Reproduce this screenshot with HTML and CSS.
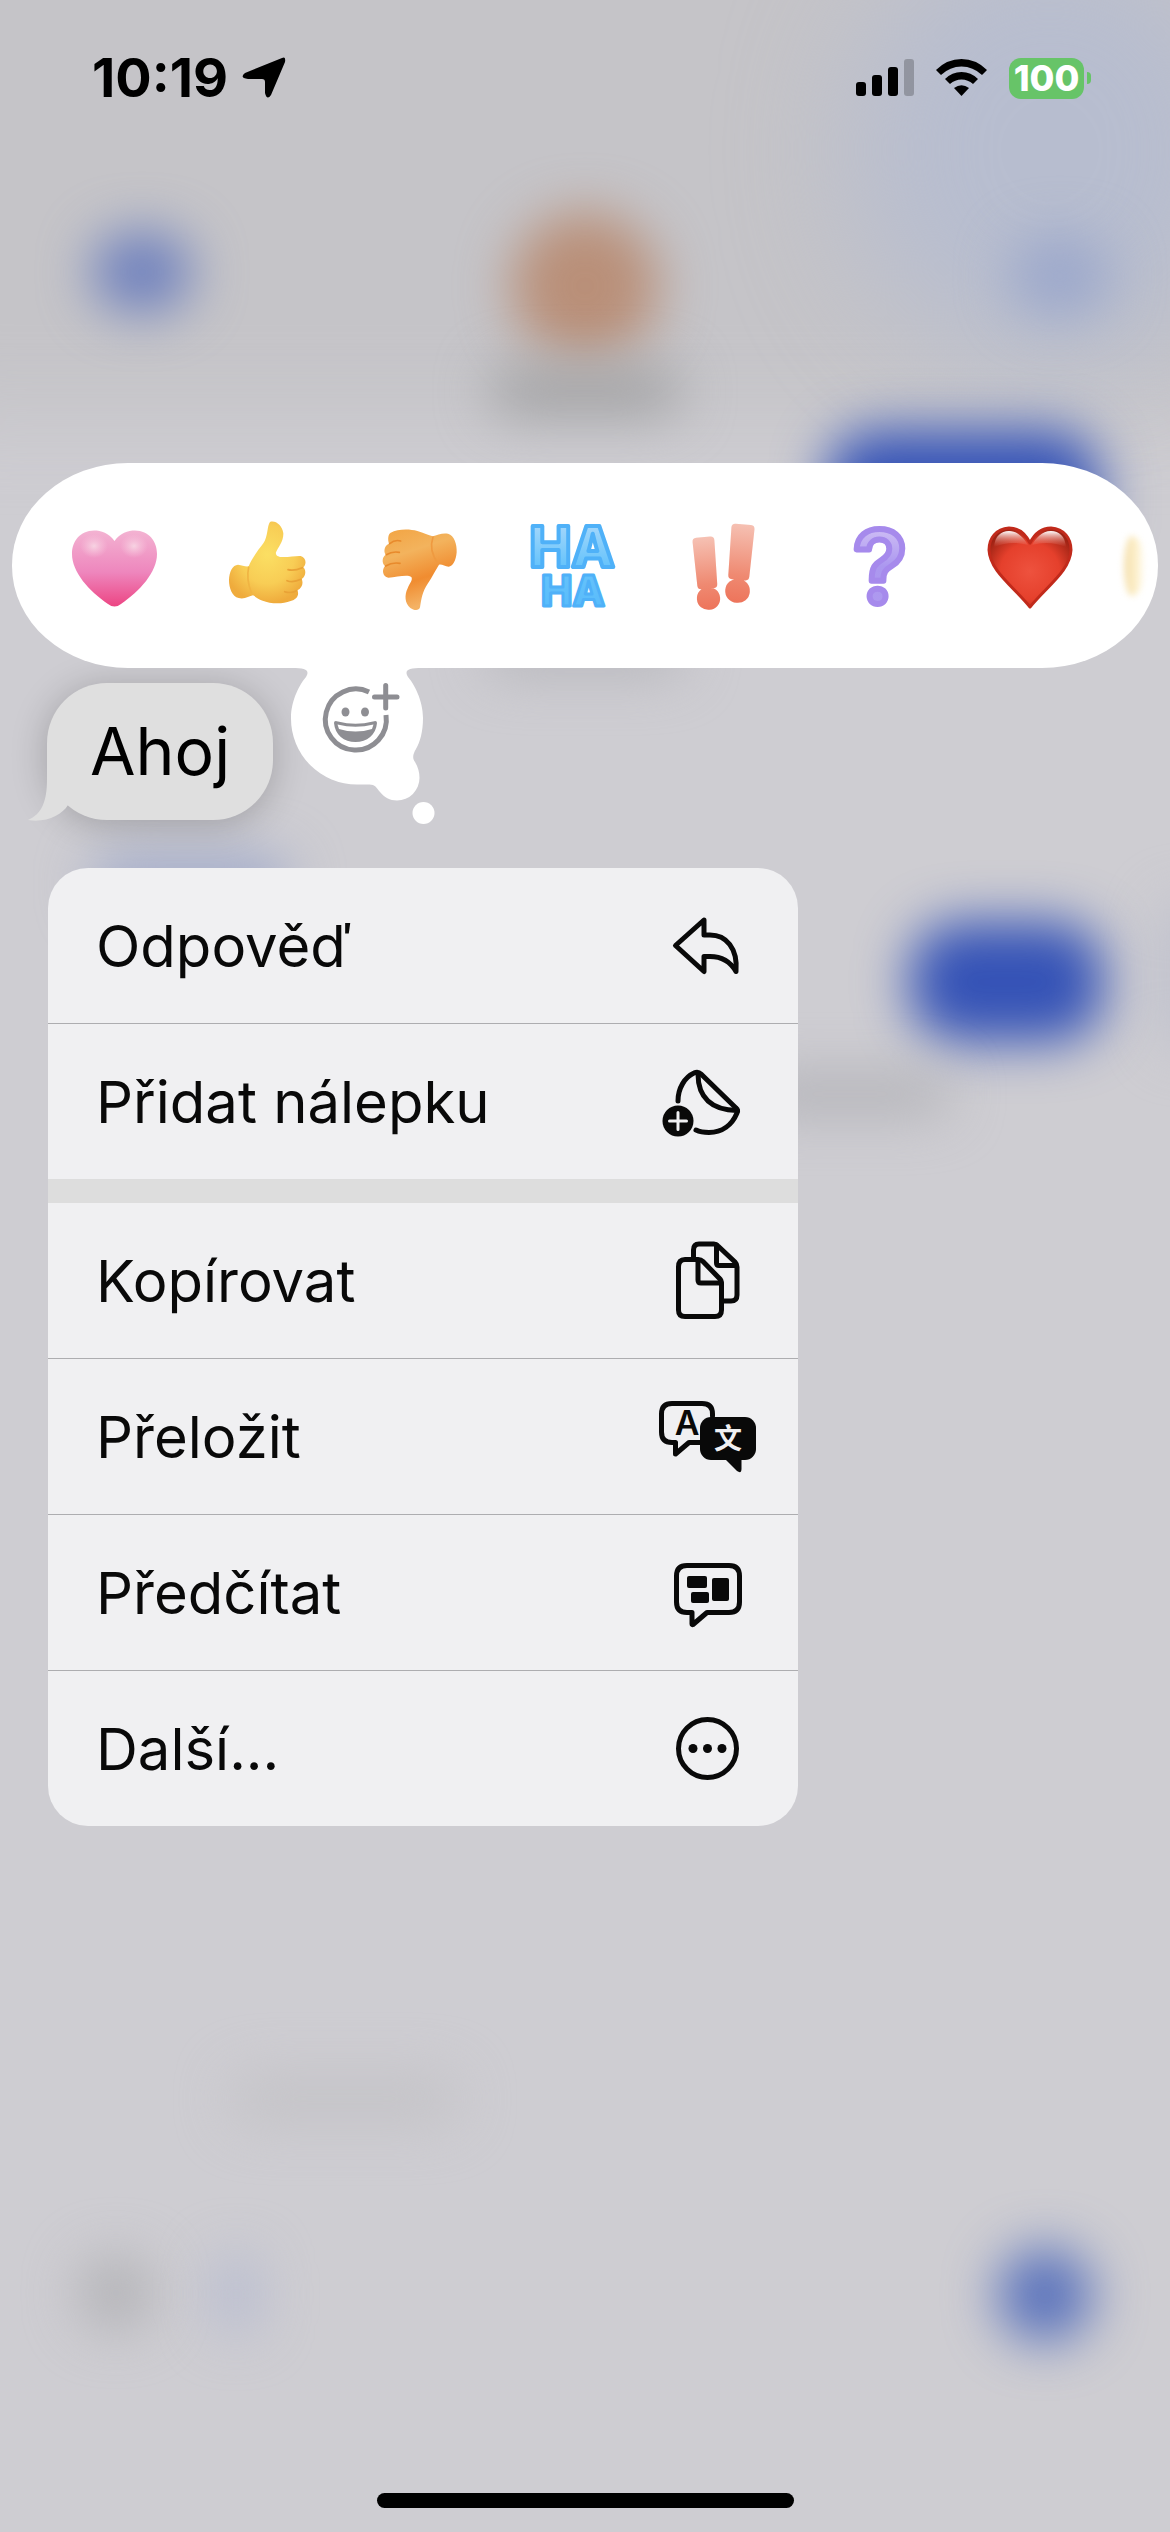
FILE: index.html
```html
<!DOCTYPE html>
<html lang="cs">
  <head>
    <meta charset="UTF-8" />
    <meta name="viewport" content="width=device-width, initial-scale=1.0" />
    <title>Zprávy</title>
    <link rel="stylesheet" href="styles.css">
  </head>
  <body>
    <!-- blurred conversation behind the menu -->
    <div class="backdrop" aria-hidden="true">
      <div class="blob navbar"></div>
      <div class="blob glow"></div>
      <div class="blob back"></div>
      <div class="blob avatar"></div>
      <div class="blob name"></div>
      <div class="blob video"></div>
      <div class="blob sent sent-top"></div>
      <div class="blob date"></div>
      <div class="blob link"></div>
      <div class="blob sent sent-low"></div>
      <div class="blob status-text"></div>
      <div class="blob edge"></div>
      <div class="blob hint"></div>
      <div class="blob plus"></div>
      <div class="blob caret"></div>
      <div class="blob send"></div>
    </div>

    <div class="screen">
      <header class="status-bar">
        <time class="clock">10:19</time>
        <svg class="location" viewBox="0 0 44 42" width="44" height="42">
          <path d="M40 1 Q44 -1 43 5 L29 38 Q25 44 23 36 V25 Q23 22 20 22 H6 Q-3 21 3 16 Z"/>
        </svg>
        <div class="status-right">
          <svg viewBox="0 0 58 38" width="58" height="38">
            <rect x="0" y="23" width="10" height="14" rx="3"/>
            <rect x="16" y="16" width="10" height="21" rx="3"/>
            <rect x="32" y="8" width="10" height="29" rx="3"/>
            <rect x="48" y="0" width="10" height="37" rx="3" opacity=".22"/>
          </svg>
          <svg viewBox="0 0 51 38" width="51" height="38">
            <path d="M0 11 Q11 0 25.500 0 T51 11 L46 16 Q37 7.500 25.500 7.500 T5 16 Z"/>
            <path d="M9 20 Q16 13 25.500 13 T42 20 L37 25 Q32 20.500 25.500 20.500 T14 25 Z"/>
            <path d="M18 29 Q25.500 23.500 33 29 L25.500 37 Z"/>
          </svg>
          <div class="battery">100</div>
        </div>
      </header>

      <main class="content">
        <section class="reactions">
          <button type="button" class="reaction" aria-label="Srdce">
            <svg viewBox="0 0 90 90">
              <defs>
                <linearGradient id="pink" x1="0" y1="0" x2="0" y2="1">
                  <stop offset="0" stop-color="#f3b3d2"/>
                  <stop offset=".55" stop-color="#ee86bd"/>
                  <stop offset="1" stop-color="#ec4583"/>
                </linearGradient>
                <radialGradient id="shine">
                  <stop offset="0" stop-color="#f7d3e2"/>
                  <stop offset="1" stop-color="#f7c3dc" stop-opacity="0"/>
                </radialGradient>
              </defs>
              <path fill="url(#pink)" d="M45.500 20 C40 12 32 9.500 25 9.500 C11 10 3 20 3 33 C3 51 20 70 39 83 Q45.500 88 52 83 C71 70 88 51 88 33 C88 20 80 10 66 9.500 C59 9.500 51 12 45.500 20Z"/>
              <ellipse cx="25" cy="25" rx="14" ry="12" fill="url(#shine)"/>
              <ellipse cx="65" cy="25" rx="14" ry="12" fill="url(#shine)"/>
            </svg>
          </button>
          <button type="button" class="reaction" aria-label="Palec nahoru">
            <svg viewBox="6 61 270 270">
              <defs>
                <radialGradient id="yellow" cx=".5" cy=".4" r=".6">
                  <stop offset="0" stop-color="#fbdf63"/>
                  <stop offset=".6" stop-color="#f8cd55"/>
                  <stop offset="1" stop-color="#efab3c"/>
                </radialGradient>
              </defs>
              <path fill="url(#yellow)" d="M150 64 C166 58 187 74 190 98 C191 122 174 140 168 155 C166 164 174 168 184 169 C205 170 228 165 242 166 C258 170 261 190 250 200 C259 208 258 226 245 235 C251 248 246 262 232 269 C239 284 229 297 212 301 C185 312 150 309 128 300 C115 296 107 288 99 284 C88 287 72 297 56 292 C36 288 27 262 27 238 C28 212 38 193 54 192 C66 193 76 199 86 197 C94 176 113 150 130 128 C144 108 141 76 150 64Z"/>
              <path fill="none" stroke="#e9a236" stroke-width="5" stroke-linecap="round" d="M247 201 Q222 212 204 207 M243 236 Q219 247 201 240 M230 270 Q212 279 194 273"/>
              <path fill="none" stroke="#f0b443" stroke-width="5" stroke-linecap="round" d="M86 200 Q78 235 94 276"/>
            </svg>
          </button>
          <button type="button" class="reaction" aria-label="Palec dolů">
            <svg viewBox="465 61 270 270">
              <defs>
                <linearGradient id="orange" x1="0" y1="0" x2=".3" y2="1">
                  <stop offset="0" stop-color="#f2a443"/>
                  <stop offset=".35" stop-color="#f3b35d"/>
                  <stop offset=".7" stop-color="#f08c30"/>
                  <stop offset="1" stop-color="#f4b264"/>
                </linearGradient>
              </defs>
              <path fill="url(#orange)" d="M515 96 C535 85 570 84 595 91 C615 96 628 104 641 107 C655 102 671 96 687 99 C706 105 714 130 713 155 C711 180 701 198 689 198 C678 198 669 190 660 192 C650 208 640 228 627 248 C609 276 608 292 603 320 C600 332 584 329 574 322 C557 308 556 283 566 263 C573 246 582 238 577 229 C565 220 533 230 508 231 C490 228 488 207 498 196 C487 186 490 168 500 162 C492 151 498 133 510 129 C506 116 507 101 515 96Z"/>
              <path fill="none" stroke="#e88a2c" stroke-width="5" stroke-linecap="round" d="M512 129 Q528 116 545 121 M502 162 Q520 151 541 155 M500 196 Q520 184 543 188"/>
              <path fill="none" stroke="#ef9a40" stroke-width="5" stroke-linecap="round" d="M642 109 Q628 150 658 190"/>
            </svg>
          </button>
          <button type="button" class="reaction" aria-label="Haha">
            <svg viewBox="0 0 90 90">
              <defs>
                <linearGradient id="blue" x1="0" y1="0" x2="0" y2="1">
                  <stop offset="0" stop-color="#b4dcfb"/>
                  <stop offset=".5" stop-color="#68c4fb"/>
                  <stop offset="1" stop-color="#56bafb"/>
                </linearGradient>
              </defs>
              <text class="haha" text-anchor="middle">
                <tspan class="haha-big" x="45" y="46">HA</tspan><tspan class="haha-small" x="46" y="85">HA</tspan>
              </text>
            </svg>
          </button>
          <button type="button" class="reaction" aria-label="Zdůraznit">
            <svg viewBox="0 0 90 90">
              <defs>
                <linearGradient id="coral" x1="0" y1="0" x2="0" y2="1">
                  <stop offset="0" stop-color="#f8d5cb"/>
                  <stop offset=".6" stop-color="#ef8a72"/>
                  <stop offset="1" stop-color="#ec664c"/>
                </linearGradient>
              </defs>
              <text class="bang bang-left" x="29" y="84" text-anchor="middle" transform="rotate(-5 29 84)">!</text>
              <text class="bang bang-right" x="57" y="77" text-anchor="middle" transform="rotate(5 57 77)">!</text>
            </svg>
          </button>
          <button type="button" class="reaction" aria-label="Otázka">
            <svg viewBox="0 0 90 90">
              <defs>
                <linearGradient id="violet" x1="0" y1="0" x2="0" y2="1">
                  <stop offset="0" stop-color="#e2d3f8"/>
                  <stop offset=".5" stop-color="#ab97ef"/>
                  <stop offset="1" stop-color="#b09bf0"/>
                </linearGradient>
              </defs>
              <text class="question" x="48" y="82" text-anchor="middle">?</text>
            </svg>
          </button>
          <button type="button" class="reaction" aria-label="Červené srdce">
            <svg viewBox="0 0 90 90">
              <defs>
                <radialGradient id="red" cx=".5" cy=".55" r=".6">
                  <stop offset="0" stop-color="#ee523e"/>
                  <stop offset=".6" stop-color="#e5402c"/>
                  <stop offset="1" stop-color="#9d2213"/>
                </radialGradient>
                <linearGradient id="gloss" x1="0" y1="0" x2="0" y2="1">
                  <stop offset="0" stop-color="#fff"/>
                  <stop offset="1" stop-color="#f08070" stop-opacity="0"/>
                </linearGradient>
              </defs>
              <path fill="url(#red)" stroke="#c12a1b" stroke-width="3" stroke-linejoin="round" d="M45 22 C39 10 31 7 24 7 C11 8 4 17 4 29 C5 50 28 65 45 86 C62 65 85 50 86 29 C86 17 79 8 66 7 C59 7 51 10 45 22Z"/>
              <path fill="url(#gloss)" d="M9 26 C10 15 16 10 24 10 C33 10 40 18 43 24 Q26 19 9 26Z M81 26 C80 15 74 10 66 10 C57 10 50 18 47 24 Q64 19 81 26Z"/>
            </svg>
          </button>
          <span class="next-reaction"></span>

          <button type="button" class="add-reaction" aria-label="Přidat reakci">
            <svg viewBox="0 16 180 170" width="180" height="170">
              <path fill="#fff" d="M12 16 H142 V18 C128 18 124 20 128 27 C134 34 143 50 143 68 C143 82 140 92 136 99 C133 104 132 108 135 112 C138 117 139.500 122 139.500 128 A22.500 22.500 0 0 1 117 150.500 C110 150.500 104 147 100 142 C96 137 95 134 88 134.500 H77 A66 66 0 0 1 11 68 C11 50 20 34 26 27 C30 20 26 18 12 18Z"/>
              <circle cx="143.500" cy="163" r="11" fill="#fff"/>
              <g fill="none" stroke="#8e8e93" stroke-width="5">
                <path d="M89 42 A30.500 30.500 0 1 0 106 65"/>
                <path stroke-linecap="round" d="M94.500 47 H117 M105.700 35.500 V58"/>
              </g>
              <g fill="#8e8e93">
                <ellipse cx="65.500" cy="62" rx="4" ry="4.500"/>
                <ellipse cx="85" cy="62" rx="4" ry="4.500"/>
                <path d="M54 73 Q54 70 58 71.500 Q75.500 76 93 71.500 Q97 70 97 73 C96 85 87 92 75.500 92 C64 92 55 85 54 73Z"/>
              </g>
              <path fill="#fff" d="M57.500 74.500 Q75.500 79 93.500 74.500 L92 79 Q75.500 84 59 79Z"/>
            </svg>
          </button>
        </section>

        <div class="message">
          <svg class="tail" viewBox="0 0 40 60" width="40" height="60">
            <path d="M19 0 V18 C19 40 14 53 0 59 C18 62 34 54 40 44 V0Z"/>
          </svg>
          <span>Ahoj</span>
        </div>

        <nav class="menu">
          <button type="button" class="item">
            <span>Odpověď</span>
            <svg viewBox="35 31 104 90">
              <path d="M84 50 L55.500 75.500 L84 101.500 V86.500 H90 C101 86.500 110 91 116 101.500 C118 78 106 65 90 65 H84Z"/>
            </svg>
          </button>
          <button type="button" class="item">
            <span>Přidat nálepku</span>
            <svg viewBox="35 187 104 90">
              <path d="M58 231 C58 218 65 207 74 203 Q78 201 81 204 L116 238 Q118.500 240 117 243 C112 255 102 262.500 89 262.500 C83 262.500 79 261.500 76 260"/>
              <path d="M78 204 C78 228 92 240 117 240.500"/>
              <circle class="solid" cx="58" cy="251" r="15.500"/>
              <path class="plus-sign" d="M49.500 251 H66.500 M58 242.500 V259.500"/>
            </svg>
          </button>
          <div class="divider"></div>
          <button type="button" class="item">
            <span>Kopírovat</span>
            <svg viewBox="35 36 104 90">
              <path d="M73.500 57 V50 Q73.500 44 79 44 H94 Q96 44 98 46 L115 62 Q117 64 117 67 V95 Q117 101 111 101 H104"/>
              <path d="M96.500 45 V63 Q96.500 65.500 99 65.500 H116"/>
              <path d="M58.500 67 Q58.500 59.500 65 59.500 H78 Q81 59.500 83 61.500 L99 78 Q101.500 80 101.500 84 V110 Q101.500 116.500 95 116.500 H65 Q58.500 116.500 58.500 110Z"/>
              <path d="M78 60 V80 Q78 83 81 83 H101"/>
            </svg>
          </button>
          <button type="button" class="item">
            <span>Přeložit</span>
            <svg viewBox="35 192 104 90">
              <path d="M92.500 216 V214 Q92.500 203.500 82 203.500 H52 Q41.500 203.500 41.500 214 V232 Q41.500 242.500 52 242.500 H55.500 V254 L69 242.500 H82"/>
              <text class="latin" x="67" y="235" text-anchor="middle">A</text>
              <rect class="solid" x="80" y="217" width="56" height="43" rx="11"/>
              <path class="solid" d="M104 258 L117 271 Q121.500 274 121.500 269 V258Z"/>
              <text class="han" x="108" y="249" text-anchor="middle">文</text>
            </svg>
          </button>
          <button type="button" class="item">
            <span>Předčítat</span>
            <svg viewBox="35 28 104 90">
              <path d="M67 45.500 H109 Q119.500 45.500 119.500 56 V82 Q119.500 92.500 109 92.500 H87 L73 104.500 Q72 105 72 104 V92.500 H67 Q56.500 92.500 56.500 82 V56 Q56.500 45.500 67 45.500Z"/>
              <rect class="solid" x="67" y="56" width="20" height="12" rx="2"/>
              <rect class="solid" x="71" y="72" width="18" height="11" rx="2"/>
              <rect class="solid" x="92" y="58" width="17" height="23" rx="2"/>
            </svg>
          </button>
          <button type="button" class="item">
            <span>Další...</span>
            <svg viewBox="35 184 104 90">
              <circle cx="87.500" cy="228.500" r="29"/>
              <circle class="solid" cx="73" cy="228.500" r="4.500"/>
              <circle class="solid" cx="87.500" cy="228.500" r="4.500"/>
              <circle class="solid" cx="102" cy="228.500" r="4.500"/>
            </svg>
          </button>
        </nav>
      </main>

      <div class="home-indicator"></div>
    </div>
  </body>
</html>
```
FILE: styles.css
```css
* {
  box-sizing: border-box;
}

body {
  margin: 0;
  background: #cecdd2;
  color: #090909;
  font-family: Inter, "Liberation Sans", sans-serif;
}

button {
  margin: 0;
  padding: 0;
  border: 0;
  background: none;
  color: inherit;
  font: inherit;
}

svg {
  display: block;
  flex: none;
  overflow: visible;
}

/* blurred chat */
.backdrop {
  position: absolute;
  inset: 0;
  overflow: hidden;
}

.blob {
  position: absolute;
  border-radius: 50px;
  filter: blur(26px);
}

.navbar {
  top: -100px;
  left: -100px;
  right: -100px;
  height: 520px;
  background: #c5c4c8;
  filter: blur(40px);
}

.glow {
  top: -60px;
  right: -80px;
  width: 400px;
  height: 420px;
  border-radius: 200px;
  background: #b7bdcf;
  filter: blur(60px);
}

.back {
  top: 232px;
  left: 92px;
  width: 100px;
  height: 80px;
  background: #6e80bd;
}

.avatar {
  top: 212px;
  left: calc(50% - 74px);
  width: 148px;
  height: 148px;
  border-radius: 50%;
  background: #b98f78;
}

.name {
  top: 366px;
  left: calc(50% - 96px);
  width: 192px;
  height: 50px;
  background: #a3a3a5;
}

.video {
  top: 236px;
  right: 60px;
  width: 100px;
  height: 80px;
  background: #9ca8cb;
}

.sent {
  background: #3452b6;
}

.sent-top {
  top: 430px;
  right: 70px;
  width: 274px;
  height: 140px;
}

.date {
  top: 630px;
  left: calc(50% - 100px);
  width: 200px;
  height: 44px;
  background: #b6b6bb;
}

.link {
  top: 854px;
  left: 90px;
  width: 200px;
  height: 60px;
  background: #a2abca;
}

.sent-low {
  top: 922px;
  right: 66px;
  width: 194px;
  height: 120px;
}

.status-text {
  top: 1074px;
  right: 220px;
  width: 200px;
  height: 40px;
  background: #b2b2b7;
}

.edge {
  top: 900px;
  right: -50px;
  width: 60px;
  height: 150px;
  background: #bfc1cd;
}

.hint {
  top: 2074px;
  left: 230px;
  width: 230px;
  height: 50px;
  background: #c4c3c7;
}

.plus {
  top: 2255px;
  left: 78px;
  width: 76px;
  height: 76px;
  background: #b3b3b7;
}

.caret {
  top: 2254px;
  left: 214px;
  width: 44px;
  height: 80px;
  background: #b6bbd0;
}

.send {
  top: 2248px;
  right: 78px;
  width: 94px;
  height: 94px;
  background: #5770bb;
}

/* foreground */
.screen {
  position: relative;
  display: flex;
  flex-direction: column;
  min-height: 100vh;
}

.status-bar {
  display: flex;
  align-items: center;
  height: 156px;
  padding: 0 79px 0 92px;
  color: #000;
}

.clock {
  font-size: 54px;
  font-weight: 700;
  line-height: 60px;
}

.location {
  margin-left: 14px;
}

.status-right {
  display: flex;
  align-items: center;
  gap: 22px;
  margin-left: auto;
}

.battery {
  position: relative;
  width: 75px;
  height: 41px;
  margin-right: 7px;
  border-radius: 12px;
  background: #67c468;
  color: #fff;
  font-size: 36px;
  font-weight: 800;
  line-height: 41px;
  text-align: center;
}

.battery::after {
  content: "";
  position: absolute;
  top: 14px;
  right: -7px;
  width: 4px;
  height: 12px;
  border-radius: 0 4px 4px 0;
  background: #67c468;
}

.content {
  padding: 307px 12px 0;
}

.reactions {
  position: relative;
  z-index: 1;
  display: flex;
  align-items: center;
  height: 205px;
  padding: 0 13px 0 26px;
  border-radius: 116px / 102px;
  background: #fff;
}

.reaction {
  display: flex;
  flex: 1;
  justify-content: center;
}

.reaction svg {
  width: 90px;
  height: 90px;
}

.haha {
  fill: url(#blue);
  stroke: #4fb1f8;
  stroke-linejoin: round;
  font-weight: 800;
}

.haha-big {
  stroke-width: 4px;
  font-size: 56px;
}

.haha-small {
  stroke-width: 3px;
  font-size: 42px;
}

.bang {
  fill: url(#coral);
  stroke: url(#coral);
  stroke-linejoin: round;
  stroke-width: 8px;
  font-weight: 700;
}

.bang-left {
  font-size: 88px;
}

.bang-right {
  font-size: 96px;
}

.question {
  fill: url(#violet);
  stroke: #a68aec;
  stroke-linejoin: round;
  stroke-width: 6px;
  font-size: 100px;
  font-weight: 600;
}

.next-reaction {
  width: 27px;
  height: 60px;
  margin-left: 12px;
  border-left: 6px solid #fff;
  border-radius: 50%;
  background: linear-gradient(90deg, #f4dfae, #fdf0cb 60%, #fff);
  filter: blur(3px);
}

.add-reaction {
  position: absolute;
  top: 203px;
  left: 268px;
}

.message {
  position: relative;
  width: fit-content;
  margin: 15px 0 0 35px;
  padding: 0 43px;
  border-radius: 60px;
  background: #dfdfdf;
  box-shadow: 0 4px 36px rgba(0, 0, 0, .22);
  color: #000;
  font-size: 66px;
  line-height: 137px;
}

.message span {
  position: relative;
}

.tail {
  position: absolute;
  bottom: -1px;
  left: -19px;
  fill: #dfdfdf;
}

.menu {
  width: 66%;
  max-width: 750px;
  min-width: 600px;
  margin: 48px 0 0 36px;
  border-radius: 40px;
  background: #f0f0f2;
  overflow: hidden;
}

.item {
  display: flex;
  align-items: center;
  justify-content: space-between;
  width: 100%;
  height: 155px;
  padding: 0 39px 0 48px;
  font-size: 58px;
  text-align: left;
}

.item + .item {
  height: 156px;
  border-top: 1px solid #adadb0;
}

.item svg {
  width: 104px;
  height: 90px;
  fill: none;
  stroke: #090909;
  stroke-width: 5px;
  stroke-linecap: round;
  stroke-linejoin: round;
}

.item .solid {
  fill: #090909;
  stroke: none;
}

.item .plus-sign {
  stroke: #f0f0f2;
  stroke-width: 3px;
}

.item text {
  fill: #090909;
  stroke: none;
  font-weight: 600;
}

.item .latin {
  font-size: 34px;
}

.item .han {
  fill: #f0f0f2;
  font-family: "Noto Sans CJK SC", sans-serif;
  font-size: 28px;
  font-weight: 700;
}

.divider {
  height: 24px;
  background: #dddddd;
}

.home-indicator {
  width: 417px;
  height: 15px;
  margin: auto auto 24px;
  border-radius: 8px;
  background: #000;
}
```
